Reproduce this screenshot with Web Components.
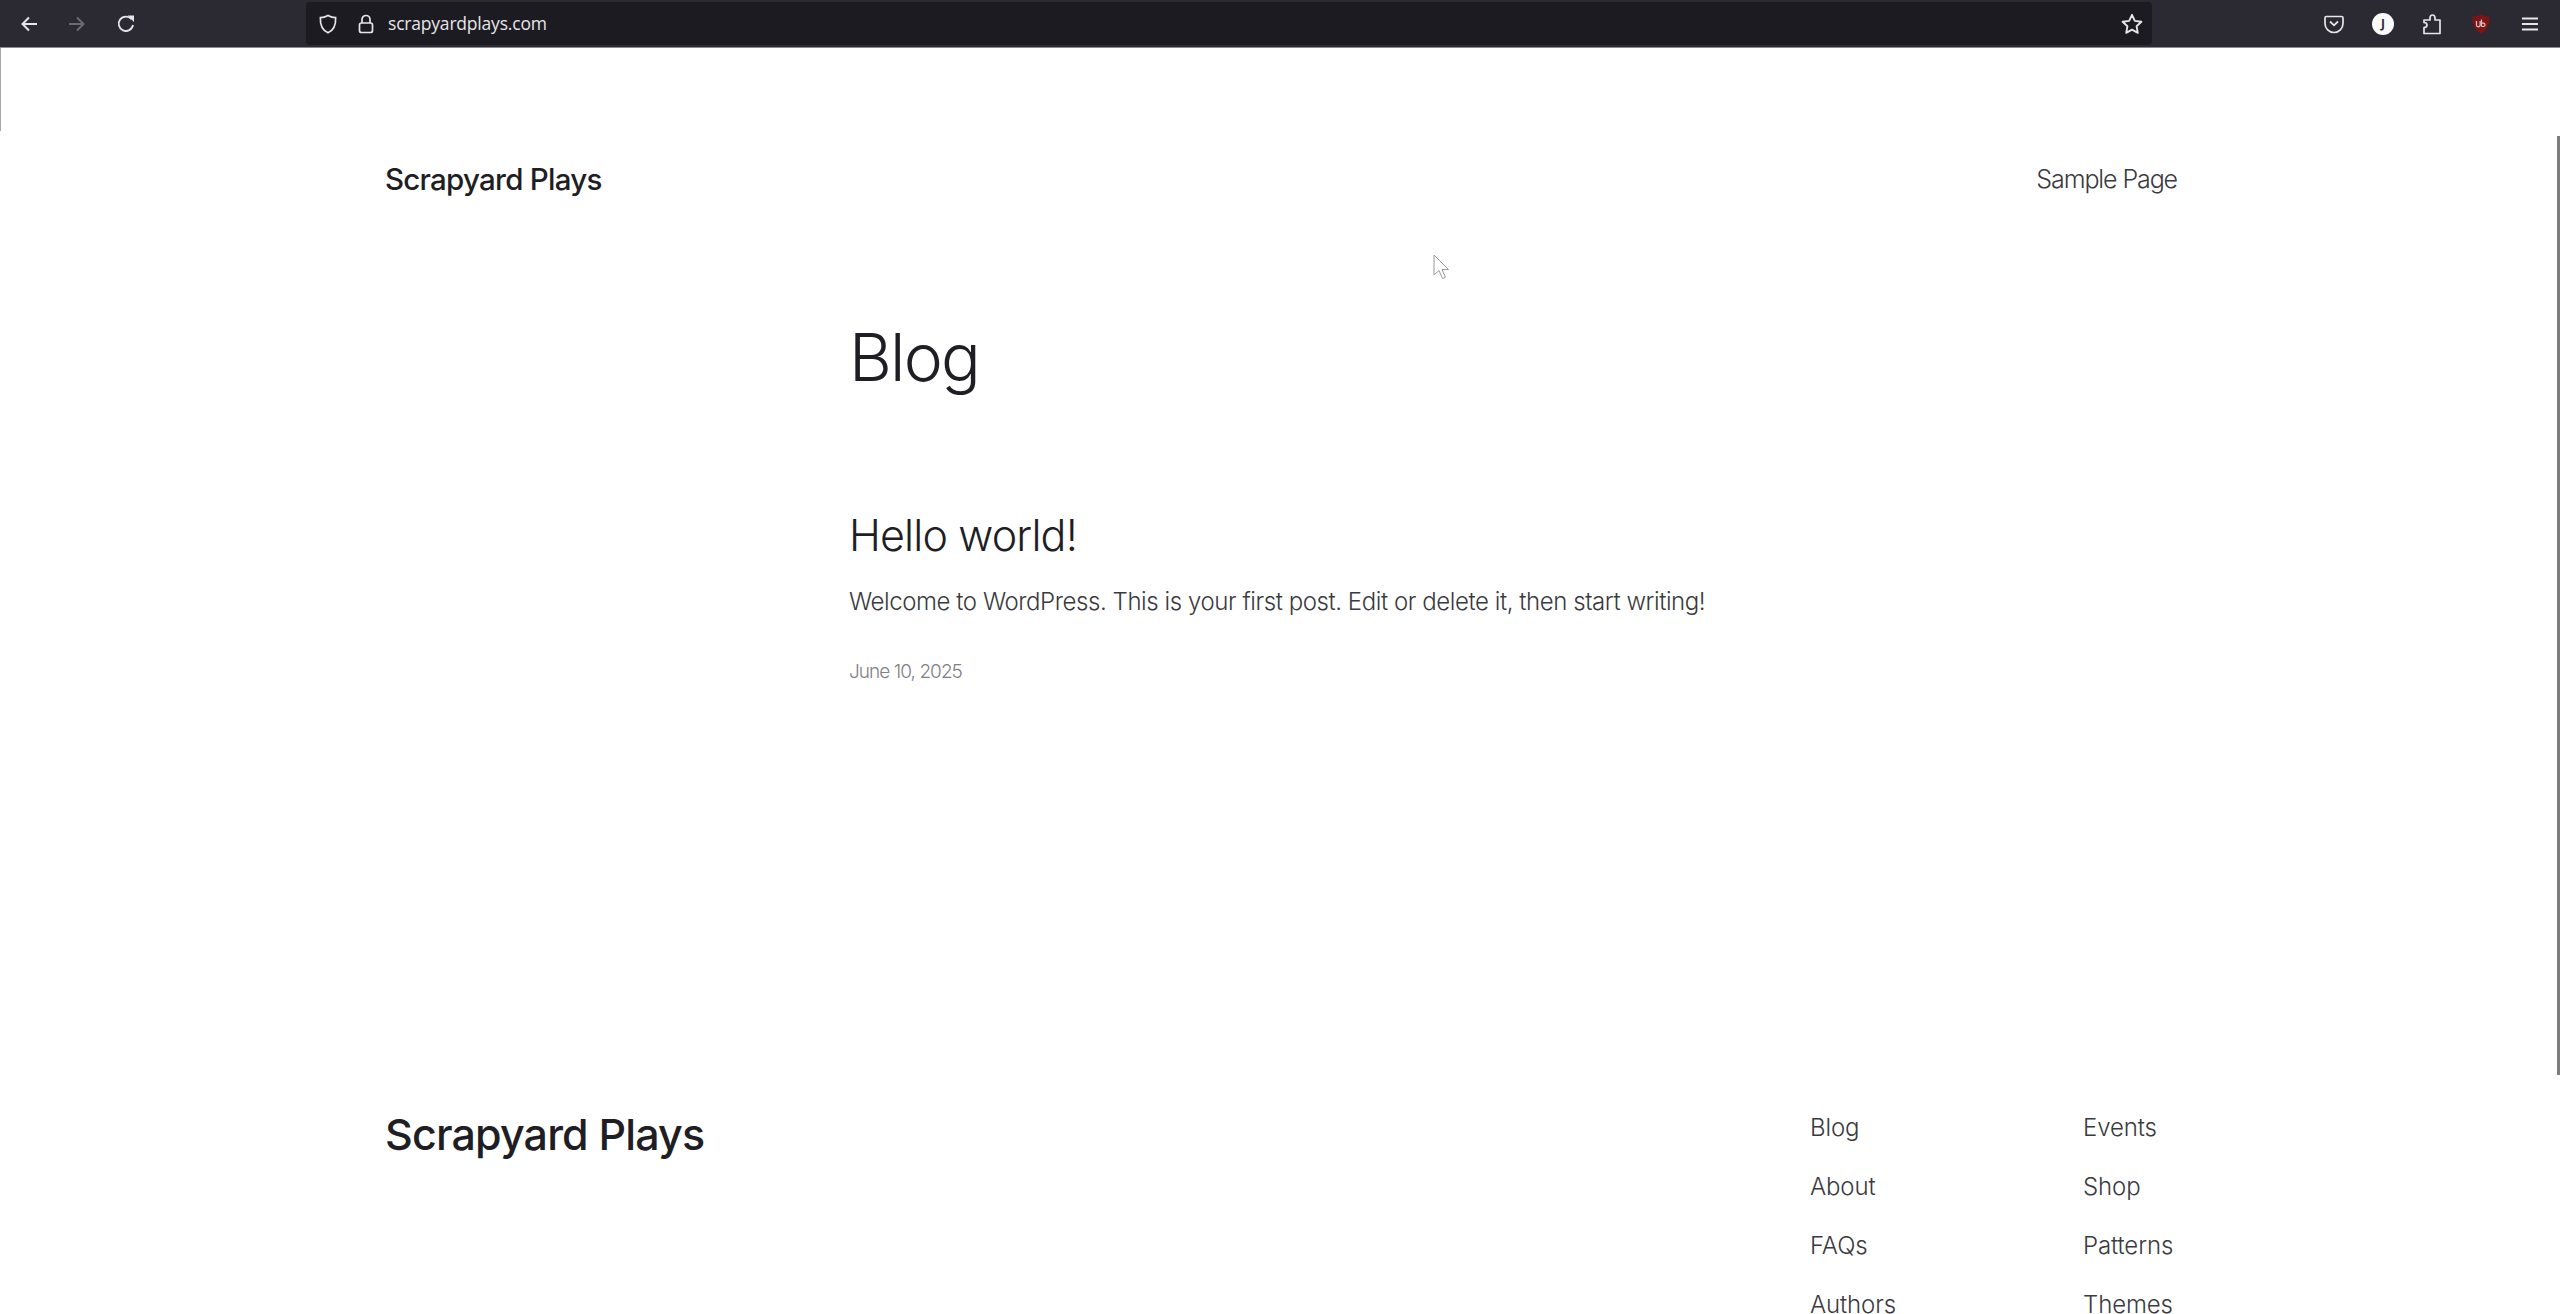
<!DOCTYPE html>
<html>
<head>
<meta charset="utf-8">
<title>Scrapyard Plays</title>
<style>
html, body { margin: 0; height: 100%; overflow: hidden; background: #fff; }
body { font-family: Inter, "Liberation Sans", sans-serif; color: #1e1e24; position: relative; }
</style>
</head>
<body>
<browser-bar url="scrapyardplays.com"></browser-bar>
<site-header title="Scrapyard Plays">
    <a>Sample Page</a>
</site-header>
<blog-main heading="Blog">
    <post-item title="Hello world!" date="June 10, 2025">Welcome to WordPress. This is your first post. Edit or delete it, then start writing!</post-item>
</blog-main>
<site-footer title="Scrapyard Plays"></site-footer>
<page-overlay></page-overlay>

<script>
const icons = {
    back: '<path d="M19 11H5M11 4.5 4.5 11l6.5 6.5" fill="none" stroke="currentColor" stroke-width="2"/>',
    forward: '<path d="M3 11h14M11 4.5l6.5 6.5-6.5 6.5" fill="none" stroke="currentColor" stroke-width="2"/>',
    reload: '<path d="M16.5 6.2A7.2 7.2 0 1 0 18 12" fill="none" stroke="currentColor" stroke-width="1.8"/><path d="M12.5 2.5h6.5V9z" fill="currentColor"/>',
    shield: '<path d="M11 2.5c2.6 1.5 5 2.2 7.6 2.2.4 7-2 12.5-7.6 15-5.6-2.5-8-8-7.6-15 2.6 0 5-.7 7.6-2.2z" fill="none" stroke="currentColor" stroke-width="1.7"/>',
    lock: '<path d="M7 10V6.5a4 4 0 0 1 8 0V10" fill="none" stroke="currentColor" stroke-width="1.7"/><rect x="4.5" y="10" width="13" height="9.5" rx="2" fill="none" stroke="currentColor" stroke-width="1.7"/>',
    star: '<path d="m11 2.6 2.6 5.5 6 .8-4.4 4.2 1.1 6L11 16.2l-5.3 2.9 1.1-6L2.400 8.900l6-.8z" fill="none" stroke="currentColor" stroke-width="1.7" stroke-linejoin="round"/>',
    pocket: '<path d="M3.500 3.500h15c.8 0 1.500.7 1.500 1.500v5.500a9 9 0 0 1-18 0V5c0-.8.7-1.500 1.500-1.500z" fill="none" stroke="currentColor" stroke-width="1.7"/><path d="m7 8.500 4 3.800 4-3.800" fill="none" stroke="currentColor" stroke-width="1.8"/>',
    puzzle: '<path d="M3 20.500V14.500c2 0 3-1 3-2.500S5 9.500 3 9.500V7h6V5c0-2 1-3 2.500-3S14 3 14 5v2h5v13.500z" fill="none" stroke="currentColor" stroke-width="1.7" stroke-linejoin="round"/>',
    menu: '<path d="M3 5.500h16M3 11h16M3 16.500h16" fill="none" stroke="currentColor" stroke-width="2"/>'
};

class ToolIcon extends HTMLElement {
    constructor() {
        super();
        this.attachShadow({ mode: 'open' });
    }
    connectedCallback() {
        const size = this.getAttribute('size') || 22;
        this.shadowRoot.innerHTML = `
            <style>
                :host { display: block; line-height: 0; flex: none; }
                svg { display: block; }
            </style>
            <svg width="${size}" height="${size}" viewBox="0 0 22 22">${icons[this.getAttribute('name')]}</svg>
        `;
    }
}
customElements.define('tool-icon', ToolIcon);

class BrowserBar extends HTMLElement {
    constructor() {
        super();
        this.attachShadow({ mode: 'open' });
    }
    connectedCallback() {
        this.shadowRoot.innerHTML = `
            <style>
                :host {
                    display: flex;
                    align-items: center;
                    height: 47px;
                    box-sizing: content-box;
                    background: #2b2a33;
                    border-bottom: 1px solid #8c8c90;
                    color: #e6e6e8;
                }
                .nav { display: flex; align-items: center; gap: 26px; padding-left: 18px; width: 306px; box-sizing: border-box; }
                .nav tool-icon:last-child { margin-left: 1px; }
                .off { color: #6a6a70; }
                .url {
                    display: flex;
                    align-items: center;
                    width: 1846px;
                    height: 43px;
                    box-sizing: border-box;
                    padding: 0 8px 0 11px;
                    background: #1c1b22;
                    border-radius: 4px;
                    font: 400 17.500px "Open Sans", sans-serif;
                    letter-spacing: -.2px;
                }
                .url span { margin-left: 11px; flex: 1; padding-bottom: 1px; }
                .url tool-icon + tool-icon { margin-left: 16px; }
                .right { display: flex; align-items: center; gap: 27px; margin-left: 171px; }
                .avatar {
                    width: 22px; height: 22px; border-radius: 50%;
                    background: #fafafa; color: #2b2a33;
                    font: 700 12px "Open Sans", sans-serif;
                    display: flex; align-items: center; justify-content: center;
                }
                .ublock { display: block; }
            </style>
            <div class="nav">
                <tool-icon name="back"></tool-icon>
                <tool-icon name="forward" class="off"></tool-icon>
                <tool-icon name="reload"></tool-icon>
            </div>
            <div class="url">
                <tool-icon name="shield"></tool-icon>
                <tool-icon name="lock"></tool-icon>
                <span>${this.getAttribute('url')}</span>
                <tool-icon name="star" size="24"></tool-icon>
            </div>
            <div class="right">
                <tool-icon name="pocket"></tool-icon>
                <div class="avatar">J</div>
                <tool-icon name="puzzle"></tool-icon>
                <svg class="ublock" width="22" height="22" viewBox="0 0 22 22">
                    <path d="M11 1.500c3 1.500 5.500 2 8.500 2.200.4 8-2.500 14-8.500 16.800C5 17.700 2.100 11.700 2.500 3.700c3-.2 5.500-.7 8.500-2.200z" fill="#7f1416"/>
                    <path d="M6.500 8v4a1.800 1.800 0 0 0 3.600 0V8M11.500 6.500V13.500M11.500 10.200h2.200a1.700 1.700 0 0 1 0 3.300h-2.200" fill="none" stroke="#d9c8c8" stroke-width="1.200"/>
                </svg>
                <tool-icon name="menu"></tool-icon>
            </div>
        `;
    }
}
customElements.define('browser-bar', BrowserBar);

class SiteHeader extends HTMLElement {
    constructor() {
        super();
        this.attachShadow({ mode: 'open' });
    }
    connectedCallback() {
        this.shadowRoot.innerHTML = `
            <style>
                :host {
                    display: flex;
                    justify-content: space-between;
                    align-items: center;
                    width: 1792px;
                    height: 40px;
                    margin: 112px 0 0 385px;
                }
                .title { font-size: 29.500px; font-weight: 500; letter-spacing: -.75px; color: #1e1e24; margin-top: -2px; }
                nav { font-size: 25px; font-weight: 300; letter-spacing: -1.100px; color: #3a3a40; margin-top: -2px; }
            </style>
            <div class="title">${this.getAttribute('title')}</div>
            <nav><slot></slot></nav>
        `;
    }
}
customElements.define('site-header', SiteHeader);

class BlogMain extends HTMLElement {
    constructor() {
        super();
        this.attachShadow({ mode: 'open' });
    }
    connectedCallback() {
        this.shadowRoot.innerHTML = `
            <style>
                :host { display: block; margin: 116px 0 0 849px; height: 791px; }
                h1 { margin: 0 0 110px; font-size: 66px; line-height: 82px; font-weight: 300; letter-spacing: -1.800px; color: #1e1e24; }
            </style>
            <h1>${this.getAttribute('heading')}</h1>
            <slot></slot>
        `;
    }
}
customElements.define('blog-main', BlogMain);

class PostItem extends HTMLElement {
    constructor() {
        super();
        this.attachShadow({ mode: 'open' });
    }
    connectedCallback() {
        this.shadowRoot.innerHTML = `
            <style>
                :host { display: block; }
                h2 { margin: 0; font-size: 43px; line-height: 54px; font-weight: 300; letter-spacing: -.85px; color: #1e1e24; }
                p { margin: 24px 0 0; font-size: 24px; line-height: 32px; font-weight: 300; letter-spacing: -.43px; color: #3a3a40; }
                time { display: block; margin-top: 42px; font-size: 19px; line-height: 24px; font-weight: 300; letter-spacing: -.95px; color: #808086; }
            </style>
            <h2>${this.getAttribute('title')}</h2>
            <p><slot></slot></p>
            <time>${this.getAttribute('date')}</time>
        `;
    }
}
customElements.define('post-item', PostItem);

class SiteFooter extends HTMLElement {
    constructor() {
        super();
        this.attachShadow({ mode: 'open' });
    }
    connectedCallback() {
        const col = items => items.map(i => `<a>${i}</a>`).join('');
        this.shadowRoot.innerHTML = `
            <style>
                :host { display: flex; padding-left: 385px; }
                .title { width: 1425px; font-size: 43px; line-height: 54px; font-weight: 500; letter-spacing: -.85px; color: #1e1e24; }
                .cols { display: grid; grid-template-columns: 273px auto; padding-top: 5px; }
                .col { display: flex; flex-direction: column; gap: 27px; }
                a { font-size: 24px; line-height: 32px; font-weight: 300; letter-spacing: -.12px; color: #3a3a40; }
            </style>
            <div class="title">${this.getAttribute('title')}</div>
            <div class="cols">
                <div class="col">${col(['Blog', 'About', 'FAQs', 'Authors'])}</div>
                <div class="col">${col(['Events', 'Shop', 'Patterns', 'Themes'])}</div>
            </div>
        `;
    }
}
customElements.define('site-footer', SiteFooter);

// scrollbar, cursor and the stray edge line lie on top of the page
class PageOverlay extends HTMLElement {
    constructor() {
        super();
        this.attachShadow({ mode: 'open' });
    }
    connectedCallback() {
        this.shadowRoot.innerHTML = `
            <style>
                :host { display: block; }
                .scroll { position: absolute; right: 0; top: 136px; width: 3px; height: 939px; background: #7d7d80; }
                .edge { position: absolute; left: 0; top: 48px; width: 1px; height: 83px; background: #a8a8aa; }
                svg { position: absolute; left: 1433px; top: 254px; }
            </style>
            <div class="edge"></div>
            <div class="scroll"></div>
            <svg width="16" height="26" viewBox="0 0 16 26">
                <path d="M1 1v20l5-4.500 3.500 8 3-1.300-3.500-7.700h6.500z" fill="#fff" stroke="#9a9a9e" stroke-width="1"/>
            </svg>
        `;
    }
}
customElements.define('page-overlay', PageOverlay);
</script>
</body>
</html>
